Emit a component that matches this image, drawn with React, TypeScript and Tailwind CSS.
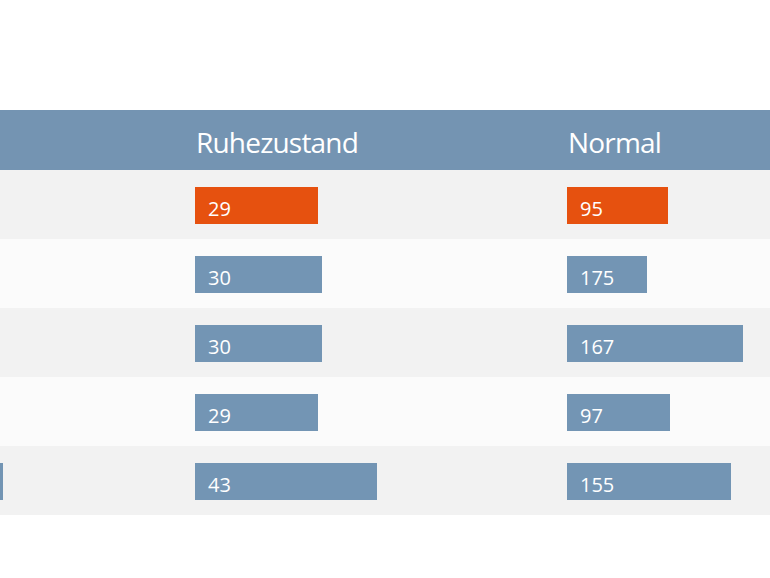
const rows = [
  { first: 0, rest: { value: 29, width: 123 }, normal: { value: 95, width: 101 }, highlight: true },
  { first: 0, rest: { value: 30, width: 127 }, normal: { value: 175, width: 80 }, highlight: false },
  { first: 0, rest: { value: 30, width: 127 }, normal: { value: 167, width: 176 }, highlight: false },
  { first: 0, rest: { value: 29, width: 123 }, normal: { value: 97, width: 103 }, highlight: false },
  { first: 3, rest: { value: 43, width: 182 }, normal: { value: 155, width: 164 }, highlight: false },
]

function Bar({ value, width, highlight }: { value: number; width: number; highlight: boolean }) {
  return (
    <div
      className={`flex h-[37px] items-center pl-[13px] pt-[7px] text-[20px] leading-none text-white ${
        highlight ? 'bg-[#e6510f]' : 'bg-[#7395b4]'
      }`}
      style={{ width }}
    >
      {value}
    </div>
  )
}

export default function App() {
  return (
    <div className="h-[578px] w-[770px] overflow-hidden bg-white font-['Open_Sans',sans-serif]">
      <div className="pt-[110px]">
        <div className="grid h-[60px] grid-cols-[195px_372px_1fr] items-center bg-[#7494b2] pt-1 text-[28px] leading-none tracking-[-0.8px] text-white">
          <div />
          <div className="pl-px">Ruhezustand</div>
          <div className="pl-px">Normal</div>
        </div>
        {rows.map((row, i) => (
          <div
            key={i}
            className={`grid h-[69px] grid-cols-[195px_372px_1fr] items-center pt-[2px] ${
              i % 2 === 0 ? 'bg-[#f2f2f2]' : 'bg-[#fbfbfb]'
            }`}
          >
            <div>
              {row.first > 0 && <div className="h-[37px] bg-[#7395b4]" style={{ width: row.first }} />}
            </div>
            <div>
              <Bar value={row.rest.value} width={row.rest.width} highlight={row.highlight} />
            </div>
            <div>
              <Bar value={row.normal.value} width={row.normal.width} highlight={row.highlight} />
            </div>
          </div>
        ))}
      </div>
    </div>
  )
}
